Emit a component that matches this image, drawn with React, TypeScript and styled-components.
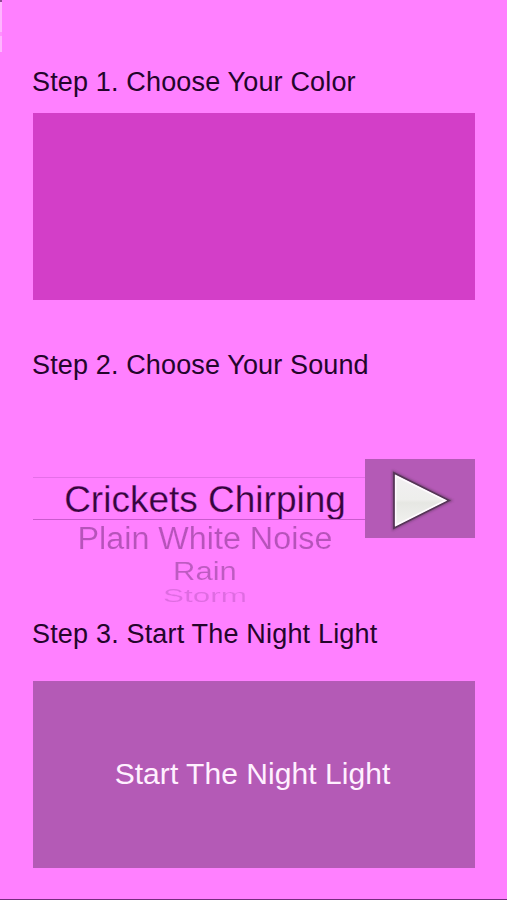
import React from "react";
import styled, { createGlobalStyle } from "styled-components";

const GlobalStyle = createGlobalStyle`
  * { box-sizing: border-box; }
  body { margin: 0; background: #ff80ff; }
`;

const Screen = styled.main`
  position: relative;
  width: 507px;
  height: 900px;
  padding: 64px 32px 0 33px;
  overflow: hidden;
  display: flex;
  flex-direction: column;
  background: #ff80ff;
  border-bottom: 1px solid #742c7c;
  color: #24052b;
  font-family: "Liberation Sans", Arial, sans-serif;
`;

const EdgeGlint = styled.div`
  position: absolute;
  left: 0;
  top: 0;
  width: 2px;
  height: 52px;
  background: linear-gradient(#8f4a93 0 2px, #ffb5ff 2px 32px, #ff90ff 32px 36px, #ffb5ff 36px);
`;

const StepTitle = styled.h2<{ $tracking: number }>`
  margin: 0 0 0 -1px;
  height: 36px;
  line-height: 36px;
  font-size: 27px;
  font-weight: 400;
  white-space: nowrap;
  letter-spacing: ${(p) => p.$tracking}px;
`;

const ColorSwatch = styled.button`
  width: 442px;
  height: 187px;
  margin: 13px 0 47px;
  padding: 0;
  border: 0;
  background: #d33ec8;
`;

const SoundRow = styled.section`
  display: flex;
  height: 233px;
  padding-top: 76px;
`;

const Picker = styled.div`
  width: 332px;
  height: 140px;
  padding-top: 18px;
`;

const Option = styled.div<{
  $height: number;
  $size: number;
  $squash: number;
  $color: string;
  $selected?: boolean;
  $thin: number;
}>`
  display: flex;
  align-items: center;
  justify-content: center;
  height: ${(p) => p.$height}px;
  border-style: solid;
  border-color: #e56fe8 transparent #c95acd;
  border-width: ${(p) => (p.$selected ? "1px 0" : "0")};
  overflow: hidden;
  color: ${(p) => p.$color};
  font-size: ${(p) => p.$size}px;
  line-height: 1;
  white-space: nowrap;

  span {
    padding: ${(p) => (p.$selected ? "2px" : "0")} 0 0 12px;
    transform: scaleY(${(p) => p.$squash});
    -webkit-text-stroke: ${(p) => p.$thin}px #ff80ff;
  }
`;

const PlayButton = styled.button`
  width: 110px;
  height: 79px;
  padding: 0;
  border: 0;
  display: block;
  background: #b45ab6;

  svg { display: block; }
`;

const StartButton = styled.button`
  width: 442px;
  height: 187px;
  margin-top: 29px;
  padding: 0 3px 2px 0;
  border: 0;
  background: #b45ab6;
  color: #fff0ff;
  font: 400 30px "Liberation Sans", Arial, sans-serif;
  letter-spacing: 0.05px;
  white-space: nowrap;
`;

const PlayIcon = () => (
  <svg width="110" height="79" viewBox="0 0 110 79" aria-hidden="true">
    <defs>
      <linearGradient id="paper" x1="0" y1="0" x2="0" y2="1">
        <stop offset="0" stopColor="#f2f0f2" />
        <stop offset="0.48" stopColor="#eeeeec" />
        <stop offset="0.54" stopColor="#e6e7e3" />
        <stop offset="1" stopColor="#f3f3f1" />
      </linearGradient>
      <filter id="soft" x="-20%" y="-20%" width="140%" height="140%">
        <feGaussianBlur stdDeviation="1.2" />
      </filter>
    </defs>
    <path d="M28.5 13.5V69.5L85 41.5Z" fill="none" stroke="#70406f" strokeWidth="3" opacity=".7" filter="url(#soft)" />
    <path d="M29 14V69L84 41.5Z" fill="url(#paper)" stroke="#573558" strokeWidth="1.8" />
    <path d="M30.7 17V66.2L80.3 41.5Z" fill="none" stroke="#fffaff" strokeWidth="1.5" />
  </svg>
);

export default function App() {
  return (
    <>
      <GlobalStyle />
      <Screen>
        <EdgeGlint />
        <StepTitle $tracking={0.16}>Step 1. Choose Your Color</StepTitle>
        <ColorSwatch aria-label="Choose color" />
        <StepTitle $tracking={0.14}>Step 2. Choose Your Sound</StepTitle>
        <SoundRow>
          <Picker>
            <Option $height={43} $size={37} $squash={1} $color="#35063d" $thin={0.25} $selected>
              <span>Crickets Chirping</span>
            </Option>
            <Option $height={36} $size={32.3} $squash={0.96} $color="#b653ba" $thin={0.2}>
              <span>Plain White Noise</span>
            </Option>
            <Option $height={30} $size={31} $squash={0.82} $color="#bd5bc1" $thin={0.2}>
              <span>Rain</span>
            </Option>
            <Option $height={20} $size={31.5} $squash={0.57} $color="#de6ce1" $thin={0.2}>
              <span>Storm</span>
            </Option>
          </Picker>
          <PlayButton aria-label="Play sound">
            <PlayIcon />
          </PlayButton>
        </SoundRow>
        <StepTitle $tracking={0.18}>Step 3. Start The Night Light</StepTitle>
        <StartButton>Start The Night Light</StartButton>
      </Screen>
    </>
  );
}
